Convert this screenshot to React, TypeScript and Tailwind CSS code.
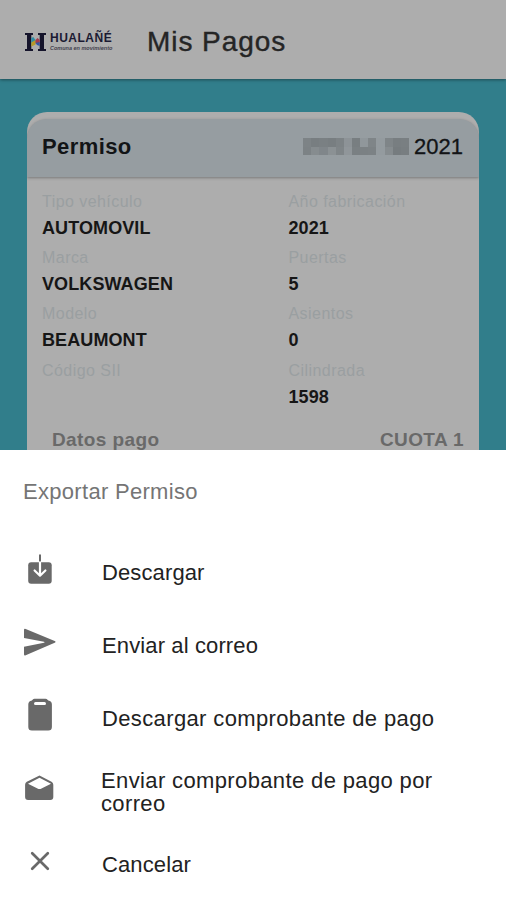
import React from "react";

const fields = [
  ["Tipo vehículo", "AUTOMOVIL", "Año fabricación", "2021"],
  ["Marca", "VOLKSWAGEN", "Puertas", "5"],
  ["Modelo", "BEAUMONT", "Asientos", "0"],
  ["Código SII", "", "Cilindrada", "1598"],
];

function Field({ label, value }: { label: string; value: string }) {
  return (
    <div className="h-[56.23px]">
      <div className="h-[26px] text-[16px] leading-[26px] tracking-[0.45px] text-[#9a9fa1]">{label}</div>
      <div className="h-[27px] text-[18px] font-bold leading-[27px] tracking-[0.1px] text-[#161616]">{value}</div>
    </div>
  );
}

// Concealed plate number: two rows of grey cells.
const plate = [
  "bg-[#7d8386]", "bg-[#787e81]", "bg-[#7a8083]", "bg-[#787e81]", "bg-[#7d8386]", "bg-[#8d9397]", "bg-[#787e81]", "bg-[#90979b]", "bg-[#7f8588]", "bg-[#949b9f]", "bg-[#7f8588]", "bg-[#787e81]", "bg-[#797f82]",
  "bg-[#7c8285]", "bg-[#868c8f]", "bg-[#80868a]", "bg-[#8b9194]", "bg-[#7f8588]", "bg-[#90969a]", "bg-[#7a8083]", "bg-[#7b8184]", "bg-[#7c8285]", "bg-[#949b9f]", "bg-[#868c8f]", "bg-[#767c7f]", "bg-[#787e81]",
];

function Logo() {
  return (
    <div className="flex h-[22px] w-[90px] items-center">
      <svg className="ml-px h-[20px] w-[21px] shrink-0" viewBox="0 0 21 20">
        <path d="M0 1h8v2H6.300v14H8v2H0v-2h2V3H0zM13 1h8v2h-2v14h2v2h-8v-2h1.700V3H13z" fill="#15142b" />
        <path d="M6.300 6l2-1 2.200 3v3.500l-4.200 2z" fill="#2d8da6" />
        <path d="M6.300 10.500l4.200-2.500v4.500l-4.200 2z" fill="#b99a28" />
        <path d="M10.500 8l2-2 2.200 2v4l-4.200-1z" fill="#a63b4b" />
        <path d="M10.500 11l4.200-1v4l-2.700-1z" fill="#3158a8" />
      </svg>
      <div className="ml-[4px] h-[21px] whitespace-nowrap">
        <div className="text-[12px] font-bold leading-[14px] tracking-[0.5px] text-[#1b1a33]">HUALAÑÉ</div>
        <div className="text-[5.5px] font-bold italic leading-[6px] text-[#44434f]">Comuna en movimiento</div>
      </div>
    </div>
  );
}

const icons = {
  download: (
    <>
      <rect x="4.200" y="9.300" width="23.500" height="21.500" rx="3" fill="#696969" />
      <path d="M16 1.500v8" stroke="#696969" strokeWidth="2" />
      <path d="M16 9.300v13M10.600 17.500l5.400 5.200 5.400-5.200" stroke="#fff" strokeWidth="2.200" fill="none" strokeLinecap="round" strokeLinejoin="round" />
    </>
  ),
  send: <path d="M0 4q0-1.700 1.700-1.100l29 12q1.900.9 0 1.800L1.700 29.300Q0 30 0 28.200V20.800l20-4q1.400-.5 0-1L0 12z" fill="#696969" />,
  clipboard: (
    <>
      <path d="M10.500-.3h11q1.300 0 2 1l.8.9q3.600.5 3.600 4V28a3.600 3.600 0 0 1-3.600 3.600H7.900A3.600 3.600 0 0 1 4.300 28V5.600q0-3.500 3.600-4l.7-.9q.8-1 1.900-1z" fill="#696969" />
      <rect x="10" y="3" width="12" height="3" rx="1.500" fill="#fff" />
    </>
  ),
  mail: (
    <>
      <path d="M15.500 3.600L27.500 9.800q1.800 1 1.800 3V25a3 3 0 0 1-3 3H4.100a3 3 0 0 1-3-3V12.800q0-2 1.700-3z" fill="#696969" />
      <path d="M15.500 5.700L27 11.700 17.500 16.400q-2 1.100-4 0L4 11.700z" fill="#fff" />
    </>
  ),
  close: <path d="M8.200 8.200l15.600 15.600M23.800 8.200L8.200 23.800" stroke="#696969" strokeWidth="2.700" strokeLinecap="round" />,
};

const short = "ml-[46px] whitespace-nowrap pt-0.5 text-[22px] leading-[26px] tracking-[0.12px] text-[#222]";
const long = "ml-[46px] whitespace-nowrap pt-0.5 text-[22px] leading-[26px] tracking-[0.37px] text-[#222]";
const wrapped = "ml-[45px] w-[350px] pt-[3px] text-[22px] leading-[23px] tracking-[0.37px] text-[#222]";

const actions: { icon: keyof typeof icons; label: string; style: string }[] = [
  { icon: "download", label: "Descargar", style: short },
  { icon: "send", label: "Enviar al correo", style: short },
  { icon: "clipboard", label: "Descargar comprobante de pago", style: long },
  { icon: "mail", label: "Enviar comprobante de pago por correo", style: wrapped },
  { icon: "close", label: "Cancelar", style: short },
];

export default function App() {
  return (
    <div className="flex h-[900px] w-[506px] flex-col overflow-hidden bg-white font-['Liberation_Sans',Arial,sans-serif]">
      <header className="z-10 flex h-[79px] shrink-0 items-center bg-[#adadad] pl-6 pt-1 shadow-[0_1px_3px_rgba(0,0,0,0.4)]">
        <Logo />
        <h1 className="ml-[33px] text-[28px] leading-8 tracking-[0.95px] text-[#252525] [-webkit-text-stroke:0.4px_#252525]">Mis Pagos</h1>
      </header>
      <main className="h-[371px] shrink-0 overflow-hidden bg-[#317e8b] px-[27px] pt-[33px]">
        <section className="h-[360px] overflow-hidden rounded-t-[20px] bg-[#adadad] pt-[7px]">
          <div className="flex h-[58px] items-center justify-between rounded-t-[20px] bg-[#969da1] pb-[3px] pl-[15px] pr-4 text-[22px] text-[#121416] shadow-[0_1px_3px_rgba(0,0,0,0.3)]">
            <h2 className="font-bold tracking-[0.4px]">Permiso</h2>
            <div className="flex items-center">
              <div className="mr-[5px] grid h-[17px] w-[106px] grid-cols-13 blur-[0.6px]">
                {plate.map((c, i) => <div key={i} className={c} />)}
              </div>
              <span className="[-webkit-text-stroke:0.3px_#121416]">2021</span>
            </div>
          </div>
          <div className="px-[15px] pt-[12px]">
            {fields.map(([a, b, c, d]) => (
              <div key={a} className="grid grid-cols-[246.500px_1fr]">
                <Field label={a} value={b} />
                <Field label={c} value={d} />
              </div>
            ))}
          </div>
          <div className="flex justify-between pl-[25px] pr-[15px] pt-[13px] text-[19px] font-bold leading-[26px] tracking-[0.4px] text-[#696969]">
            <span>Datos pago</span>
            <span>CUOTA 1</span>
          </div>
        </section>
      </main>
      <section className="h-[450px] shrink-0 bg-white pt-[26px]">
        <h3 className="mb-[27px] pl-[23px] text-[22px] leading-8 tracking-[0.3px] text-[#757575]">Exportar Permiso</h3>
        {actions.map(({ icon, label, style }) => (
          <button key={label} className="flex h-[73px] w-full items-center pl-6 text-left">
            <svg className="mb-1.5 size-8 shrink-0 overflow-visible" viewBox="0 0 32 32">{icons[icon]}</svg>
            <span className={style}>{label}</span>
          </button>
        ))}
      </section>
    </div>
  );
}
